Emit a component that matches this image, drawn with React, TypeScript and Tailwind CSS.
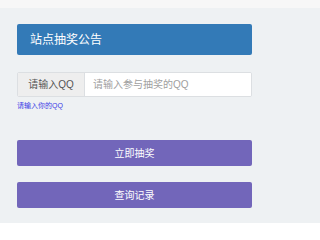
export default function App() {
  return (
    <div className="min-h-[223px] bg-[#eef1f3] font-['Liberation_Sans','Noto_Sans_CJK_SC',sans-serif]">
      {/* top strip */}
      <div className="h-2 bg-[#f7f7f7]" />

      <div className="ml-[17px] w-[235px] pt-4">
        {/* notice panel heading */}
        <div className="flex h-[31px] items-center rounded-[2px] bg-[#337ab7] pl-[13px] text-[12px] text-white">
          站点抽奖公告
        </div>

        {/* QQ input group */}
        <div className="mt-[17px] flex h-[25px] overflow-hidden rounded-[2px] border border-[#dcdfe2] bg-white">
          <span className="flex w-[67px] shrink-0 items-center justify-center border-r border-[#dcdfe2] bg-[#eeeeee] text-[10px] text-[#555]">
            请输入QQ
          </span>
          <input
            type="text"
            placeholder="请输入参与抽奖的QQ"
            className="min-w-0 flex-1 bg-white pl-2 text-[10px] text-[#555] outline-none placeholder:text-[#a0a0a0]"
          />
        </div>
        <div className="mt-[4px] text-[7px] leading-[9px] text-[#3c3ce6]">请输入你的QQ</div>

        {/* actions */}
        <button className="mt-[30px] flex h-[26px] w-full items-center justify-center rounded-[2px] bg-[#7266ba] text-[10px] text-white">
          立即抽奖
        </button>
        <button className="mt-4 flex h-[26px] w-full items-center justify-center rounded-[2px] bg-[#7266ba] text-[10px] text-white">
          查询记录
        </button>
      </div>
    </div>
  )
}
